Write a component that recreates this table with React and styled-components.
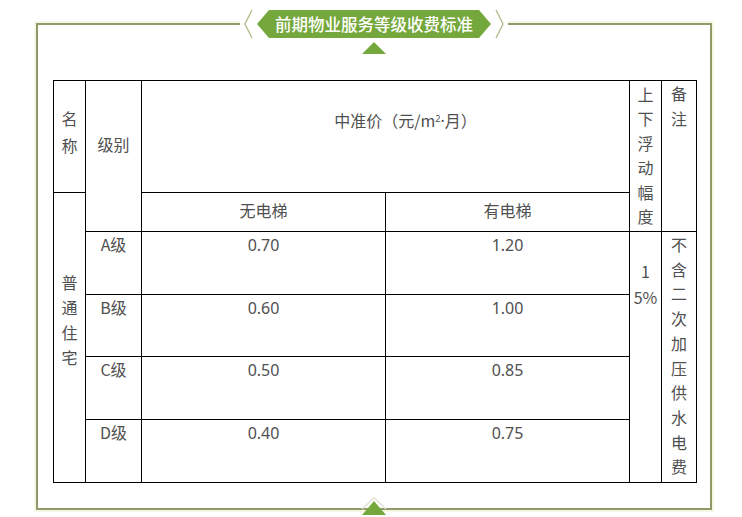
import React from "react";
import styled, { createGlobalStyle } from "styled-components";

const Global = createGlobalStyle`
  html, body { margin: 0; padding: 0; background: #ffffff; }
  body { font-family: "Noto Sans CJK SC", "Noto Sans", sans-serif; }
  #root { width: 742px; height: 517px; overflow: hidden; }
`;

const Page = styled.div`
  width: 742px;
  height: 517px;
  padding: 23px 0 0 36px;
  box-sizing: border-box;
`;

const Frame = styled.section`
  position: relative;
  width: 676px;
  height: 487px;
  box-sizing: border-box;
  border: 2px solid #8f9a68;
  box-shadow: 0 0 0 2px #f6f8e6;
  padding: 55px 0 0 15px;
`;

const Header = styled.div`
  position: absolute;
  top: -17px;
  left: 50%;
  transform: translateX(-50%);
  display: flex;
  align-items: center;
  gap: 4px;
  padding: 0 3px;
  background: #ffffff;
  height: 32px;
`;

const Badge = styled.h1`
  margin: 0;
  width: 234px;
  height: 28px;
  background: #74a83c;
  clip-path: polygon(0 50%, 12px 0, calc(100% - 12px) 0, 100% 50%, calc(100% - 12px) 100%, 12px 100%);
  color: #ffffff;
  font-size: 16.5px;
  font-weight: 500;
  line-height: 28px;
  text-align: center;
  letter-spacing: 0;
`;

const Pointer = styled.svg`
  position: absolute;
  left: 50%;
  transform: translateX(-50%);
  top: ${(p) => p.$top}px;
`;

const Table = styled.table`
  border-collapse: collapse;
  table-layout: fixed;
  width: 643px;
  color: #505050;
  font-size: 16px;
  line-height: 25px;
`;

const Row = styled.tr`
  height: ${(p) => p.$h}px;
`;

const Cell = styled.td`
  border: 1px solid #000;
  padding: ${(p) => p.$pad || "0"};
  text-align: center;
  vertical-align: ${(p) => p.$va || "top"};
  word-break: break-all;
  line-height: ${(p) => p.$lh || "25px"};
`;

const Latin = styled.span`
  font-family: "Noto Sans", sans-serif;
  font-size: ${(p) => p.$size || "16px"};
`;

const Chevron = ({ dir }) => (
  <svg width="10" height="30" viewBox="0 0 10 30">
    <polyline
      points={dir === "left" ? "9,1 2,15 9,29" : "1,1 8,15 1,29"}
      fill="none"
      stroke="#b3bd8c"
      strokeWidth="1.4"
    />
  </svg>
);

const V = ({ children }) => children.split("").map((c, i) => <div key={i}>{c}</div>);

export default function App() {
  const rows = [
    ["A级", "0.70", "1.20"],
    ["B级", "0.60", "1.00"],
    ["C级", "0.50", "0.85"],
    ["D级", "0.40", "0.75"],
  ];
  const heights = [63, 62, 63, 63];
  return (
    <>
      <Global />
      <Page>
        <Frame>
          <Header>
            <Chevron dir="left" />
            <Badge>前期物业服务等级收费标准</Badge>
            <Chevron dir="right" />
          </Header>
          <Pointer $top={17} width="24" height="12" viewBox="0 0 24 12">
            <polygon points="12,0 24,12 0,12" fill="#74a83c" />
          </Pointer>
          <Table>
            <colgroup>
              <col style={{ width: 32 }} />
              <col style={{ width: 56 }} />
              <col style={{ width: 244 }} />
              <col style={{ width: 244 }} />
              <col style={{ width: 32 }} />
              <col style={{ width: 35 }} />
            </colgroup>
            <tbody>
              <Row $h={112}>
                <Cell $va="middle" $lh="27px" $pad="0 0 10px 0">
                  <V>名称</V>
                </Cell>
                <Cell rowSpan={2} $va="middle" $pad="0 0 24px 0">级别</Cell>
                <Cell colSpan={2} $pad="25px 0 0 40px">
                  中准价（元/m<Latin $size="11px"><sup>2</sup></Latin><Latin>·</Latin>月）
                </Cell>
                <Cell rowSpan={2} $pad="1px 0 0 0" $lh="24.4px">
                  <V>上下浮动幅度</V>
                </Cell>
                <Cell rowSpan={2} $pad="0 0 0 0">
                  <V>备注</V>
                </Cell>
              </Row>
              <Row $h={39}>
                <Cell rowSpan={5} $pad="77px 0 0 0">
                  <V>普通住宅</V>
                </Cell>
                <Cell $va="middle" $pad="0 0 4px 0">无电梯</Cell>
                <Cell $va="middle" $pad="0 0 4px 0">有电梯</Cell>
              </Row>
              {rows.map((r, i) => (
                <Row key={r[0]} $h={heights[i]}>
                  <Cell>{r[0]}</Cell>
                  <Cell><Latin>{r[1]}</Latin></Cell>
                  <Cell><Latin>{r[2]}</Latin></Cell>
                  {i === 0 && (
                    <>
                      <Cell rowSpan={4} $pad="26px 0 0 0" $lh="26px">
                        1<br />5%
                      </Cell>
                      <Cell rowSpan={4} $lh="24.7px">
                        <V>不含二次加压供水电费</V>
                      </Cell>
                    </>
                  )}
                </Row>
              ))}
            </tbody>
          </Table>
          <Pointer $top={472} width="28" height="20" viewBox="0 0 28 20">
            <polyline points="2,12 14,1 26,12" fill="none" stroke="#dfe3d2" strokeWidth="1.5" />
            <polygon points="14,4 26,18 2,18" fill="#74a83c" />
          </Pointer>
        </Frame>
      </Page>
    </>
  );
}
